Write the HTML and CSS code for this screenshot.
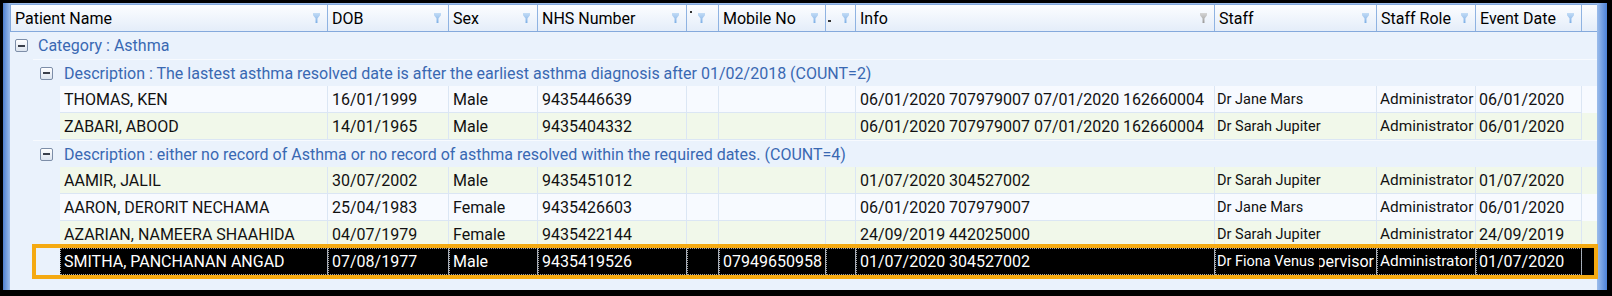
FILE: index.html
```html
<!DOCTYPE html>
<html lang="en">
<head>
<meta charset="UTF-8" />
<meta name="viewport" content="width=device-width, initial-scale=1" />
<title>Asthma Audit - Patient Results</title>
<link rel="stylesheet" href="styles.css">
</head>
<body>

<div class="window">
  <div class="grid">

    <div class="header cols">
      <div class="hcell"><span>Patient Name</span><i class="funnel"></i></div>
      <div class="hcell"><span>DOB</span><i class="funnel"></i></div>
      <div class="hcell"><span>Sex</span><i class="funnel"></i></div>
      <div class="hcell"><span>NHS Number</span><i class="funnel"></i></div>
      <div class="hcell narrow"><span class="tick"></span><i class="funnel"></i></div>
      <div class="hcell"><span>Mobile No</span><i class="funnel"></i></div>
      <div class="hcell narrow second"><span class="tick low"></span><i class="funnel"></i></div>
      <div class="hcell"><span>Info</span><i class="funnel grey"></i></div>
      <div class="hcell"><span>Staff</span><i class="funnel"></i></div>
      <div class="hcell"><span>Staff Role</span><i class="funnel"></i></div>
      <div class="hcell"><span>Event Date</span><i class="funnel"></i></div>
    </div>

    <div class="group cat"><span class="toggle"></span>Category : Asthma</div>

    <div class="group desc"><span class="toggle"></span>Description : The lastest asthma resolved date is after the earliest asthma diagnosis after 01/02/2018 (COUNT=2)</div>

    <div class="row cols blue">
      <div>THOMAS, KEN</div>
      <div>16/01/1999</div>
      <div>Male</div>
      <div>9435446639</div>
      <div></div>
      <div></div>
      <div></div>
      <div>06/01/2020 707979007 07/01/2020 162660004</div>
      <div class="staff">Dr Jane Mars</div>
      <div class="role">Administrator</div>
      <div class="date">06/01/2020</div>
    </div>

    <div class="row cols green">
      <div>ZABARI, ABOOD</div>
      <div>14/01/1965</div>
      <div>Male</div>
      <div>9435404332</div>
      <div></div>
      <div></div>
      <div></div>
      <div>06/01/2020 707979007 07/01/2020 162660004</div>
      <div class="staff">Dr Sarah Jupiter</div>
      <div class="role">Administrator</div>
      <div class="date">06/01/2020</div>
    </div>

    <div class="group desc"><span class="toggle"></span>Description : either no record of Asthma or no record of asthma resolved within the required dates. (COUNT=4)</div>

    <div class="row cols green">
      <div>AAMIR, JALIL</div>
      <div>30/07/2002</div>
      <div>Male</div>
      <div>9435451012</div>
      <div></div>
      <div></div>
      <div></div>
      <div>01/07/2020 304527002</div>
      <div class="staff">Dr Sarah Jupiter</div>
      <div class="role">Administrator</div>
      <div class="date">01/07/2020</div>
    </div>

    <div class="row cols blue">
      <div>AARON, DERORIT NECHAMA</div>
      <div>25/04/1983</div>
      <div>Female</div>
      <div>9435426603</div>
      <div></div>
      <div></div>
      <div></div>
      <div>06/01/2020 707979007</div>
      <div class="staff">Dr Jane Mars</div>
      <div class="role">Administrator</div>
      <div class="date">06/01/2020</div>
    </div>

    <div class="row cols green">
      <div>AZARIAN, NAMEERA SHAAHIDA</div>
      <div>04/07/1979</div>
      <div>Female</div>
      <div>9435422144</div>
      <div></div>
      <div></div>
      <div></div>
      <div>24/09/2019 442025000</div>
      <div class="staff">Dr Sarah Jupiter</div>
      <div class="role">Administrator</div>
      <div class="date">24/09/2019</div>
    </div>

    <div class="row cols selected">
      <div>SMITHA, PANCHANAN ANGAD</div>
      <div>07/08/1977</div>
      <div>Male</div>
      <div>9435419526</div>
      <div></div>
      <div>07949650958</div>
      <div></div>
      <div>01/07/2020 304527002</div>
      <div class="staff"><span class="who">Dr Fiona Venus</span><span class="clipped">Supervisor</span></div>
      <div class="role">Administrator</div>
      <div class="date">01/07/2020</div>
    </div>

  </div>
</div>

<!-- highlight drawn over the selected row -->
<div class="callout"></div>

</body>
</html>
```

FILE: styles.css
```css
* {
  box-sizing: border-box;
}
body {
  margin: 0;
  background: #000;
  font-family: Roboto, "Liberation Sans", Arial, sans-serif;
  font-size: 16px;
  color: #111;
}
.window {
  margin: 3px 5px 0 3px;
  height: 287px;
  padding: 1px 10px 0 7px;
  background: linear-gradient(to right, #4f80cf, #9cbdeb 7px, #9cbdeb calc(100% - 10px), #4d82d8);
}
.grid {
  height: 100%;
  background: #eaf2fc;
  overflow: hidden;
}
.cols {
  display: grid;
  --tail: 121px 89px 149px 32px 107px 30px 359px 162px 99px 106px;
}

/* column headers */
.header {
  grid-template-columns: 317px var(--tail);
  height: 28px;
  border: 1px solid #84a9dc;
  border-right: none;
  background: linear-gradient(#fcfdff, #e4edf9);
  color: #000;
}
.hcell {
  display: flex;
  align-items: center;
  justify-content: space-between;
  padding: 0 7px 0 4px;
  border-right: 1px solid #8fb3e2;
  white-space: nowrap;
  overflow: hidden;
}
.hcell.narrow {
  justify-content: flex-start;
  padding: 0 0 0 3px;
}
.hcell.second {
  padding-left: 2px;
}
.funnel {
  flex: none;
  width: 7px;
  height: 10px;
  background: linear-gradient(#c3dcf6, #7fb0e6);
  clip-path: polygon(0 0, 100% 0, 100% 22%, 64% 55%, 64% 100%, 36% 100%, 36% 55%, 0 22%);
}
.funnel.grey {
  background: linear-gradient(#d6d6d6, #9a9a9a);
}
.tick {
  width: 2px;
  height: 2px;
  background: #333;
  margin: -12px 6px 0 0;
}
.second .tick {
  margin: 6px 11px 0 0;
}
.second .tick.low {
  width: 3px;
}

/* group rows */
.group {
  height: 27px;
  display: flex;
  align-items: center;
  color: #3968b2;
  white-space: nowrap;
}
.cat {
  padding-left: 5px;
}
.desc {
  margin-left: 23px;
  padding-left: 7px;
  border-top: 1px solid #f7fafe;
}
.toggle {
  flex: none;
  width: 13px;
  height: 13px;
  margin-right: 10px;
  border: 1px solid #7d8ea8;
  border-radius: 2px;
  background: linear-gradient(#ffffff, #dce4ef);
  display: flex;
  align-items: center;
  justify-content: center;
}
.desc .toggle {
  margin-right: 11px;
}
.toggle::before {
  content: "";
  width: 7px;
  height: 2px;
  background: #3a3f4a;
}

/* data rows */
.row {
  grid-template-columns: 268px var(--tail);
  height: 27px;
  margin-left: 50px;
}
.row > div {
  display: flex;
  align-items: center;
  padding-left: 4px;
  border-right: 1px solid #dbe6f4;
  border-bottom: 1px solid #dbe6f4;
  white-space: nowrap;
  overflow: hidden;
}
.row > .staff {
  font-size: 14.5px;
  padding-left: 2px;
}
.row > .role {
  font-size: 15.4px;
  padding-left: 3px;
}
.row > .date {
  padding-left: 3px;
}
.blue {
  background: #f7faff;
}
.green {
  background: #f1f8ea;
}
.selected {
  background: #000;
  color: #fff;
}
.selected > div {
  border-right-color: #a3b2c7;
  border-bottom-color: #000;
  outline: 1px dotted #a8a8a8;
  outline-offset: -1px;
}
.selected .who {
  flex: none;
  font-size: 14.5px;
}
/* second value in the staff cell overflows and is clipped on its left */
.selected .clipped {
  flex: 1 1 0;
  min-width: 0;
  margin-left: 5px;
  margin-right: 2px;
  overflow: hidden;
  direction: rtl;
  font-size: 16px;
}

.callout {
  position: absolute;
  left: 32px;
  top: 244px;
  width: 1566px;
  height: 35px;
  border: 4px solid #f5aa12;
  pointer-events: none;
}
```
